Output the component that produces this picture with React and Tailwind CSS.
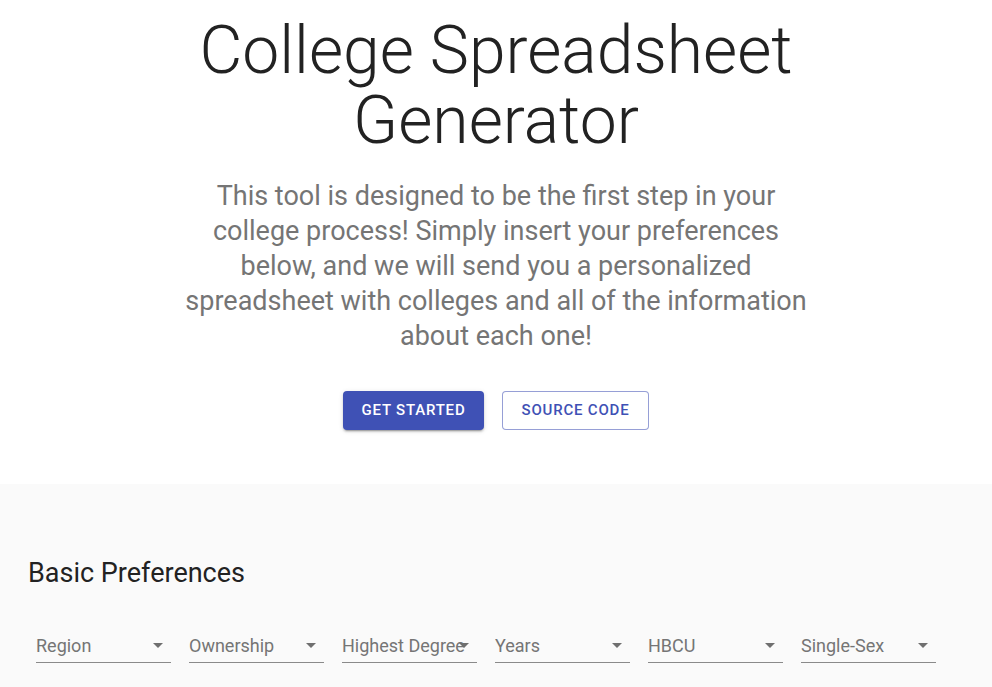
import React from "react";

const selects = ["Region", "Ownership", "Highest Degree", "Years", "HBCU", "Single-Sex"];

function Select({ label }) {
  return (
    <div className="relative w-[135px] shrink-0 border-b border-[#8a8a8a] h-[34px] flex items-end pb-[5px]">
      <span className="text-[18px] leading-[22px] text-[#757575] whitespace-nowrap overflow-hidden pr-[20px]">{label}</span>
      <svg className="absolute right-[1px] bottom-[5px]" width="24" height="24" viewBox="0 0 24 24">
        <path d="M7 10l5 5 5-5z" fill="#6f6f6f" />
      </svg>
    </div>
  );
}

export default function App() {
  return (
    <div className="min-h-[687px] bg-white font-['Roboto',sans-serif]">
      <div className="flex flex-col items-center pt-[16px]">
        <h1 className="text-[66px] leading-[70px] font-light text-[#222] text-center">
          College Spreadsheet
          <br />
          Generator
        </h1>
        <p className="mt-[23px] w-[630px] text-center text-[27px] leading-[35px] text-[#757575]">
          This tool is designed to be the first step in your college process! Simply insert your preferences below, and we will send you a personalized spreadsheet with colleges and all of the information about each one!
        </p>
        <div className="mt-[37px] flex gap-[18px]">
          <button className="h-[39px] w-[141px] rounded-[4px] bg-[#3f51b5] text-white text-[15px] font-medium tracking-[0.8px] shadow-[0_3px_1px_-2px_rgba(0,0,0,0.2),0_2px_2px_0_rgba(0,0,0,0.14),0_1px_5px_0_rgba(0,0,0,0.12)]">
            GET STARTED
          </button>
          <button className="h-[39px] w-[147px] rounded-[4px] border border-[rgba(63,81,181,0.55)] bg-white text-[#3f51b5] text-[15px] font-medium tracking-[0.8px]">
            SOURCE CODE
          </button>
        </div>
      </div>
      <div className="mt-[54px] bg-[#fafafa] pt-[72px] pb-[40px]">
        <h2 className="pl-[28px] text-[27px] leading-[34px] text-[#222]">Basic Preferences</h2>
        <div className="mt-[39px] pl-[36px] flex gap-[18px]">
          {selects.map((s) => (
            <Select key={s} label={s} />
          ))}
        </div>
      </div>
    </div>
  );
}
